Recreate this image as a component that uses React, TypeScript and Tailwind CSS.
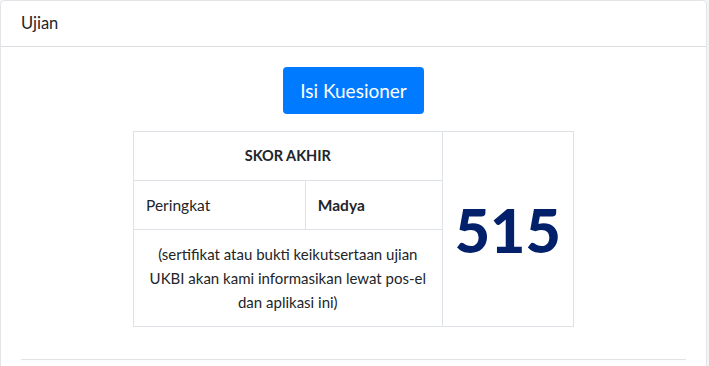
import React from "react";

export default function App() {
  return (
    <div className="w-[709px] h-[366px] overflow-hidden bg-[#f3f4f6] font-['Lato',sans-serif] text-[#212529]">
      <div className="w-[707px] h-[400px] border border-[#e2e4e8] rounded-[5px] bg-white">
        <div className="h-[46px] px-5 flex items-center border-b border-[#dcdde0] text-[16.5px]">
          Ujian
        </div>
        <div className="px-5 pt-5">
          <div className="flex justify-center">
            <button className="h-[47px] w-[141px] rounded-[4px] bg-[#007bff] text-white text-[19px] leading-none">
              Isi Kuesioner
            </button>
          </div>
          <div className="flex justify-center mt-[17px]">
            <table className="border-collapse w-[441px] text-[15.5px] leading-6">
              <colgroup>
                <col className="w-[172px]" />
                <col className="w-[137px]" />
                <col className="w-[132px]" />
              </colgroup>
              <tbody>
                <tr className="h-[49px]">
                  <td colSpan={2} className="border border-[#dee2e6] text-center font-bold text-[14.5px]">
                    SKOR AKHIR
                  </td>
                  <td
                    rowSpan={3}
                    className="border border-[#dee2e6] text-center align-middle font-black text-[61px] leading-none text-[#03216b] pt-[1px]"
                  >
                    515
                  </td>
                </tr>
                <tr className="h-[49px]">
                  <td className="border border-[#dee2e6] px-3">Peringkat</td>
                  <td className="border border-[#dee2e6] px-3 font-bold">Madya</td>
                </tr>
                <tr className="h-[97px]">
                  <td colSpan={2} className="border border-[#dee2e6] px-2 text-center whitespace-nowrap text-[15px]">
                    (sertifikat atau bukti keikutsertaan ujian
                    <br />
                    UKBI akan kami informasikan lewat pos-el
                    <br />
                    dan aplikasi ini)
                  </td>
                </tr>
              </tbody>
            </table>
          </div>
          <div className="mt-[32px] border-t border-[#e2e3e5]" />
        </div>
      </div>
    </div>
  );
}
